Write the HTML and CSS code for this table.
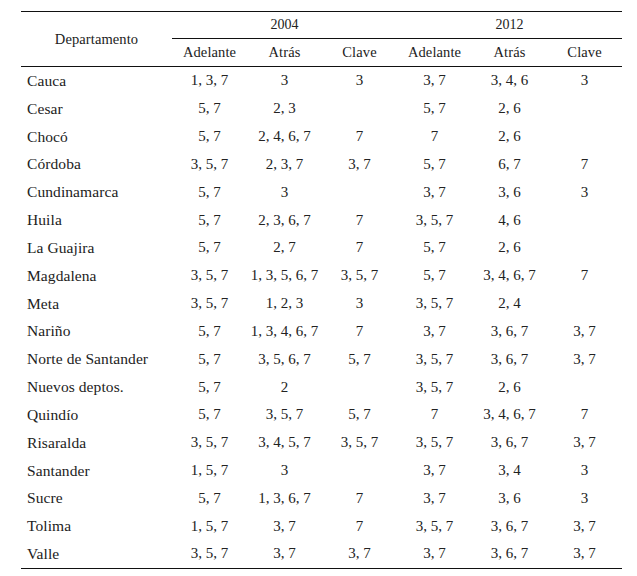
FILE: index.html
```html
<!DOCTYPE html>
<html lang="es">
<head>
<meta charset="utf-8">
<title>Departamentos</title>
<link rel="stylesheet" href="styles.css">
</head>
<body>
<table class="data">
  <colgroup>
    <col class="c-dep">
    <col class="c-val"><col class="c-val"><col class="c-val">
    <col class="c-val"><col class="c-val"><col class="c-val">
  </colgroup>
  <thead>
    <tr class="h-year">
      <th class="dep-head" rowspan="2">Departamento</th>
      <th class="year" colspan="3">2004</th>
      <th class="year" colspan="3">2012</th>
    </tr>
    <tr class="h-sub">
      <th>Adelante</th><th>Atrás</th><th>Clave</th>
      <th>Adelante</th><th>Atrás</th><th>Clave</th>
    </tr>
  </thead>
  <tbody>
    <tr><td>Cauca</td><td>1, 3, 7</td><td>3</td><td>3</td><td>3, 7</td><td>3, 4, 6</td><td>3</td></tr>
    <tr><td>Cesar</td><td>5, 7</td><td>2, 3</td><td></td><td>5, 7</td><td>2, 6</td><td></td></tr>
    <tr><td>Chocó</td><td>5, 7</td><td>2, 4, 6, 7</td><td>7</td><td>7</td><td>2, 6</td><td></td></tr>
    <tr><td>Córdoba</td><td>3, 5, 7</td><td>2, 3, 7</td><td>3, 7</td><td>5, 7</td><td>6, 7</td><td>7</td></tr>
    <tr><td>Cundinamarca</td><td>5, 7</td><td>3</td><td></td><td>3, 7</td><td>3, 6</td><td>3</td></tr>
    <tr><td>Huila</td><td>5, 7</td><td>2, 3, 6, 7</td><td>7</td><td>3, 5, 7</td><td>4, 6</td><td></td></tr>
    <tr><td>La Guajira</td><td>5, 7</td><td>2, 7</td><td>7</td><td>5, 7</td><td>2, 6</td><td></td></tr>
    <tr><td>Magdalena</td><td>3, 5, 7</td><td>1, 3, 5, 6, 7</td><td>3, 5, 7</td><td>5, 7</td><td>3, 4, 6, 7</td><td>7</td></tr>
    <tr><td>Meta</td><td>3, 5, 7</td><td>1, 2, 3</td><td>3</td><td>3, 5, 7</td><td>2, 4</td><td></td></tr>
    <tr><td>Nariño</td><td>5, 7</td><td>1, 3, 4, 6, 7</td><td>7</td><td>3, 7</td><td>3, 6, 7</td><td>3, 7</td></tr>
    <tr><td>Norte de Santander</td><td>5, 7</td><td>3, 5, 6, 7</td><td>5, 7</td><td>3, 5, 7</td><td>3, 6, 7</td><td>3, 7</td></tr>
    <tr><td>Nuevos deptos.</td><td>5, 7</td><td>2</td><td></td><td>3, 5, 7</td><td>2, 6</td><td></td></tr>
    <tr><td>Quindío</td><td>5, 7</td><td>3, 5, 7</td><td>5, 7</td><td>7</td><td>3, 4, 6, 7</td><td>7</td></tr>
    <tr><td>Risaralda</td><td>3, 5, 7</td><td>3, 4, 5, 7</td><td>3, 5, 7</td><td>3, 5, 7</td><td>3, 6, 7</td><td>3, 7</td></tr>
    <tr><td>Santander</td><td>1, 5, 7</td><td>3</td><td></td><td>3, 7</td><td>3, 4</td><td>3</td></tr>
    <tr><td>Sucre</td><td>5, 7</td><td>1, 3, 6, 7</td><td>7</td><td>3, 7</td><td>3, 6</td><td>3</td></tr>
    <tr><td>Tolima</td><td>1, 5, 7</td><td>3, 7</td><td>7</td><td>3, 5, 7</td><td>3, 6, 7</td><td>3, 7</td></tr>
    <tr class="last"><td>Valle</td><td>3, 5, 7</td><td>3, 7</td><td>3, 7</td><td>3, 7</td><td>3, 6, 7</td><td>3, 7</td></tr>
  </tbody>
</table>
</body>
</html>
```

FILE: styles.css
```css
html, body {
  margin: 0;
  padding: 0;
  background: #ffffff;
}

body {
  font-family: "Liberation Serif", "Times New Roman", serif;
  color: #222222;
}

.data {
  margin: 11px 0 0 21px;
  width: 601px;
  table-layout: fixed;
  border-collapse: separate;
  border-spacing: 0;
}

.c-dep { width: 151px; }
.c-val { width: 75px; }

.data th,
.data td {
  padding: 0;
  vertical-align: middle;
  text-align: center;
  white-space: nowrap;
}

.data th {
  font-weight: normal;
  font-size: 14.5px;
  letter-spacing: 0.1px;
}

.h-year th {
  border-top: 1px solid #111;
}

.h-year { height: 28px; }
.h-sub { height: 28px; }

.data th.year {
  border-bottom: 1px solid #111;
  font-size: 14px;
  letter-spacing: 0;
}

.dep-head {
  padding-top: 2px;
}

.h-sub th,
.dep-head {
  border-bottom: 1px solid #111;
}

.data td {
  font-size: 15px;
  height: 27.83px;
}

.data td:first-child {
  text-align: left;
  padding-left: 6px;
  font-size: 15.5px;
  letter-spacing: 0.08px;
}

.last td {
  border-bottom: 1px solid #111;
}
```
